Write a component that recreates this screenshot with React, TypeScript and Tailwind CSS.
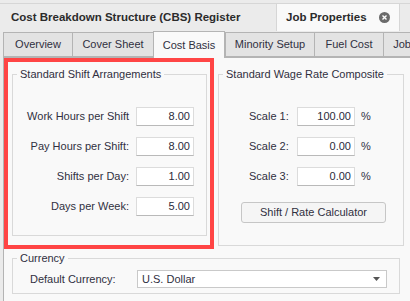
import React from "react";

const font = "font-['Liberation_Sans',Arial,sans-serif]";

const subTabs = [
  { label: "Overview", w: "w-[69px]" },
  { label: "Cover Sheet", w: "w-[81px]" },
  { label: "Cost Basis", w: "w-[72px]", active: true },
  { label: "Minority Setup", w: "w-[89px]" },
  { label: "Fuel Cost", w: "w-[69px]" },
  { label: "Job Setup", w: "w-[69px]" },
];

const shiftRows = [
  { label: "Work Hours per Shift", value: "8.00" },
  { label: "Pay Hours per Shift:", value: "8.00" },
  { label: "Shifts per Day:", value: "1.00" },
  { label: "Days per Week:", value: "5.00" },
];

const scaleRows = [
  { label: "Scale 1:", value: "100.00" },
  { label: "Scale 2:", value: "0.00" },
  { label: "Scale 3:", value: "0.00" },
];

const NumBox = ({ value }: { value: string }) => (
  <div className="w-[58px] h-[19px] bg-white border border-[#dcdcdc] border-b-[#b9b9b9] flex items-center justify-end pr-[3px] text-[#2a2a3a]">
    {value}
  </div>
);

export default function App() {
  return (
    <div className={`w-[410px] h-[301px] overflow-hidden bg-[#ebebeb] text-[11px] text-[#30303f] ${font}`}>
      {/* Document tabs */}
      <div className="h-[31px] pt-[3px]">
        <div className="flex h-full border-t border-[#d6d6d6] text-[11.5px]">
          <div className="w-[277px] flex items-center pl-[11px] font-bold text-[#2b2b2b] border-r border-[#d6d6d6]">
            Cost Breakdown Structure (CBS) Register
          </div>
          <div className="w-[123px] flex items-center pl-[9px] pr-[9px] bg-[#f9f9f9] font-bold text-[#2b2b2b] border-r border-[#d6d6d6]">
            <span className="flex-1">Job Properties</span>
            <svg width="11" height="11" viewBox="0 0 11 11">
              <circle cx="5.5" cy="5.5" r="5.5" fill="#6b6b6b" />
              <path d="M3.5 3.5l4 4M7.5 3.5l-4 4" stroke="#fff" strokeWidth="1.4" />
            </svg>
          </div>
          <div className="flex-1" />
        </div>
      </div>

      {/* Page tabs */}
      <div className="h-[26px] pl-[3px] flex items-end">
        {subTabs.map((t) =>
          t.active ? (
            <div
              key={t.label}
              className={`${t.w} shrink-0 h-[27px] -mb-px relative z-10 bg-[#f9f9f9] border border-b-0 border-[#b4b4b4] flex items-center justify-center`}
            >
              {t.label}
            </div>
          ) : (
            <div
              key={t.label}
              className={`${t.w} shrink-0 h-[25px] bg-[#e3e3e3] border border-r-0 border-[#b4b4b4] flex items-center justify-center`}
            >
              {t.label}
            </div>
          )
        )}
      </div>

      {/* Page body */}
      <div className="ml-[3px] h-[244px] bg-[#f9f9f9] border-l border-t border-[#b4b4b4]">
        <div className="flex">
          <div className="w-[210px] h-[191px] border-4 border-[#ff4545]">
            <fieldset className="ml-[4px] mt-[4px] w-[195px] h-[170px] border border-[#d9d9d9]">
              <legend className="ml-[4px] px-[3px] leading-[16px]">Standard Shift Arrangements</legend>
              <div className="pt-[25px] flex flex-col gap-[11px]">
                {shiftRows.map((r) => (
                  <div key={r.label} className="flex items-center gap-[7px]">
                    <span className="w-[116px] text-right">{r.label}</span>
                    <NumBox value={r.value} />
                  </div>
                ))}
              </div>
            </fieldset>
          </div>

          <fieldset className="ml-[4px] mt-[8px] w-[186px] h-[180px] border border-[#d9d9d9]">
            <legend className="ml-[4px] px-[3px] leading-[16px]">Standard Wage Rate Composite</legend>
            <div className="pt-[25px] pl-[30px] flex flex-col gap-[11px]">
              {scaleRows.map((r) => (
                <div key={r.label} className="flex items-center">
                  <span className="w-[48px]">{r.label}</span>
                  <NumBox value={r.value} />
                  <span className="ml-[6px]">%</span>
                </div>
              ))}
            </div>
            <div className="pl-[22px] pt-[16px]">
              <button className="w-[145px] h-[21px] rounded-[3px] border border-[#c6c6c6] bg-[#f5f5f5] text-[#30303f]">
                Shift / Rate Calculator
              </button>
            </div>
          </fieldset>
        </div>

        <fieldset className="ml-[8px] mt-[1px] w-[388px] h-[44px] border border-[#d9d9d9]">
          <legend className="ml-[4px] px-[3px] leading-[16px]">Currency</legend>
          <div className="flex items-center pt-[4px]">
            <span className="w-[124px] pl-[17px]">Default Currency:</span>
            <div className="w-[250px] h-[18px] bg-white border border-[#c9c9c9] flex items-center pl-[4px] pr-[6px]">
              <span className="flex-1">U.S. Dollar</span>
              <svg width="7" height="4" viewBox="0 0 7 4">
                <path d="M0 0h7L3.5 4z" fill="#555" />
              </svg>
            </div>
          </div>
        </fieldset>
      </div>
    </div>
  );
}
